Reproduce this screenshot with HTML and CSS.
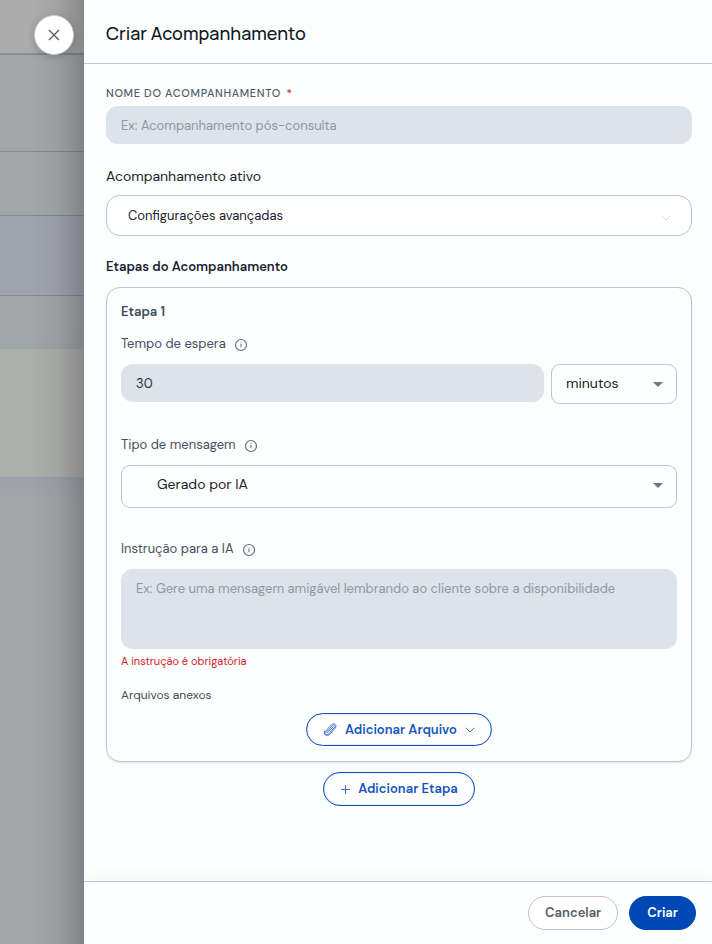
FILE: index.html
```html
<!DOCTYPE html>
<html lang="pt-BR">
<head>
    <meta charset="UTF-8">
    <meta name="viewport" content="width=device-width, initial-scale=1">
    <title>Criar Acompanhamento</title>
    <link rel="stylesheet" href="styles.css">
</head>
<body>
<svg width="0" height="0" class="sprite" aria-hidden="true">
    <symbol id="info" viewBox="0 0 14 14">
        <circle cx="7" cy="7" r="5.5" fill="none" stroke="currentColor" stroke-width="1.2"/>
        <path d="M6.4 6.2H7.2L6.8 9.3M7.1 4.4V5" fill="none" stroke="currentColor"/>
    </symbol>
    <symbol id="chevron" viewBox="0 0 10 6">
        <path d="M.8.8L5 5L9.2.8" fill="none" stroke="currentColor"/>
    </symbol>
    <symbol id="caret" viewBox="0 0 10 5">
        <path d="M0 0H10L5 5Z" fill="currentColor"/>
    </symbol>
</svg>
<div class="page">
    <div class="backdrop">
        <div class="strip strip-top"></div>
        <div class="strip strip-tabs"></div>
        <div class="strip strip-filter"></div>
        <div class="strip strip-head"></div>
        <div class="strip strip-gap"></div>
        <div class="strip strip-row"></div>
        <div class="strip strip-rest"></div>
        <button type="button" class="close" aria-label="Fechar">
            <svg width="12" height="12" viewBox="0 0 12 12"><path d="M1 1L11 11M11 1L1 11" fill="none" stroke="currentColor" stroke-width="1.2"/></svg>
        </button>
    </div>
    <form class="drawer">
        <header class="drawer-header">
            <h1>Criar Acompanhamento</h1>
        </header>
        <main class="drawer-body">
            <label class="label-caps" for="nome">Nome do acompanhamento <span class="required">*</span></label>
            <input class="field" id="nome" type="text" placeholder="Ex: Acompanhamento pós-consulta">

            <p class="active-label">Acompanhamento ativo</p>
            <button type="button" class="accordion">
                <span>Configurações avançadas</span>
                <svg width="10" height="6"><use href="#chevron"/></svg>
            </button>

            <h2>Etapas do Acompanhamento</h2>
            <section class="card">
                <h3>Etapa 1</h3>
                <div class="group">
                    <div class="label-row">
                        <label for="tempo">Tempo de espera</label>
                        <svg width="14" height="14"><use href="#info"/></svg>
                    </div>
                    <div class="time-row">
                        <input class="field" id="tempo" type="text" inputmode="numeric" value="30">
                        <div class="select">
                            <select aria-label="Unidade de tempo">
                                <option>minutos</option>
                            </select>
                            <svg width="10" height="5"><use href="#caret"/></svg>
                        </div>
                    </div>
                </div>
                <div class="group">
                    <div class="label-row">
                        <label for="tipo">Tipo de mensagem</label>
                        <svg width="14" height="14"><use href="#info"/></svg>
                    </div>
                    <div class="select select-type">
                        <select id="tipo">
                            <option>Gerado por IA</option>
                        </select>
                        <svg width="10" height="5"><use href="#caret"/></svg>
                    </div>
                </div>
                <div class="group">
                    <div class="label-row">
                        <label for="instrucao">Instrução para a IA</label>
                        <svg width="14" height="14"><use href="#info"/></svg>
                    </div>
                    <textarea class="field" id="instrucao" placeholder="Ex: Gere uma mensagem amigável lembrando ao cliente sobre a disponibilidade"></textarea>
                    <p class="error">A instrução é obrigatória</p>
                </div>
                <p class="files-label">Arquivos anexos</p>
                <button type="button" class="btn btn-outline">
                    <svg width="14" height="14" viewBox="0 0 14 14"><path d="M9.8 4.1L5 9.3C4.2 10.1 3.3 9.3 4 8.5L9.3 2.7C10.7 1.2 12.8 3 11.4 4.6L5.9 10.8C3.7 13.2.5 10.5 2.7 8L8.4 1.8C10.9-.8 14.6 2.4 12.2 5.2L6.7 11.5C3.9 14.5-.3 11.1 1.8 8" fill="none" stroke="currentColor" stroke-width=".9" stroke-linecap="round"/></svg>
                    <span>Adicionar Arquivo</span>
                    <svg width="10" height="6"><use href="#chevron"/></svg>
                </button>
            </section>
            <button type="button" class="btn btn-outline btn-step">
                <svg width="10" height="10" viewBox="0 0 10 10"><path d="M5.5 1V10M1 5.5H10" fill="none" stroke="currentColor"/></svg>
                <span>Adicionar Etapa</span>
            </button>
        </main>
        <footer class="drawer-footer">
            <button type="button" class="btn btn-cancel">Cancelar</button>
            <button type="submit" class="btn btn-primary">Criar</button>
        </footer>
    </form>
</div>
</body>
</html>
```
FILE: styles.css
```css
* {
    box-sizing: border-box;
    margin: 0;
    padding: 0;
}

body {
    font-family: "DM Sans", Inter, sans-serif;
    font-size: 13px;
    line-height: 20px;
    color: #1b222b;
    background: #fdfefe;
}

button, input, select, textarea {
    font: inherit;
    color: inherit;
}

button {
    cursor: pointer;
}

svg {
    flex: none;
    display: block;
}

.sprite {
    position: absolute;
}

.page {
    display: grid;
    grid-template-columns: 84px minmax(0, 1fr);
    min-height: 100vh;
}

/* dimmed page behind the drawer */
.backdrop {
    position: relative;
    display: flex;
    flex-direction: column;
    background: #a3a7aa;
}

.backdrop::after {
    content: "";
    position: absolute;
    top: 0;
    right: 0;
    bottom: 0;
    width: 54px;
    background: linear-gradient(to right, rgba(0, 0, 0, 0), rgba(0, 0, 0, .05) 50%, rgba(0, 0, 0, .21));
}

.strip-top {
    height: 55px;
    background: #acacad;
    border-bottom: 2px solid #868c90;
}

.strip-tabs {
    height: 97px;
    border-bottom: 1px solid #868c8f;
}

.strip-filter {
    height: 64px;
    border-bottom: 1px solid #7f8d9c;
}

.strip-head {
    height: 80px;
    background: #a0a4ae;
    border-bottom: 1px solid #7f8d9c;
}

.strip-gap {
    height: 53px;
    background: linear-gradient(#a3a7aa 60%, #9ea5a9);
}

.strip-row {
    height: 128px;
    background: #acaeac;
}

.strip-rest {
    flex: 1;
    background: linear-gradient(#9ca1ab, #a3a7aa 24px);
}

.close {
    position: absolute;
    top: 15px;
    right: 10px;
    z-index: 1;
    display: flex;
    align-items: center;
    justify-content: center;
    width: 40px;
    height: 40px;
    color: #4c555e;
    background: #fff;
    border: 1px solid #c3ccd6;
    border-radius: 50%;
    box-shadow: 0 2px 8px rgba(0, 0, 0, .2);
}

.drawer {
    display: flex;
    flex-direction: column;
}

.drawer-header {
    padding: 21px 22px 18px;
    border-bottom: 1px solid #bcc4d0;
}

h1 {
    font-family: Manrope, "DM Sans", Inter, sans-serif;
    font-size: 18px;
    font-weight: 500;
    line-height: 24px;
    color: #101820;
}

.drawer-body {
    flex: 1;
    display: flex;
    flex-direction: column;
    padding: 19px 20px 20px 22px;
}

.label-caps {
    margin-bottom: 3px;
    font-size: 11px;
    font-weight: 500;
    letter-spacing: .06em;
    text-transform: uppercase;
    color: #525c66;
}

.required {
    margin-left: 2px;
    color: #dc2626;
}

.field {
    display: block;
    width: 100%;
    height: 38px;
    padding: 0 15px;
    color: #2b323b;
    background: #dce3eb;
    border: 0;
    border-radius: 12px;
}

.field::placeholder {
    color: #8f979f;
    opacity: 1;
}

textarea.field {
    height: 80px;
    padding: 10px 15px;
    resize: none;
}

.active-label {
    margin: 22px 0 9px;
    font-size: 14px;
}

.accordion {
    display: flex;
    align-items: center;
    justify-content: space-between;
    height: 41px;
    padding: 0 20px 0 21px;
    background: #fff;
    border: 1px solid #bcc4d0;
    border-radius: 14px;
}

.accordion svg {
    margin-top: 4px;
    color: #d9dcdf;
}

h2 {
    margin: 21px 0 10px;
    font-size: 13px;
    font-weight: 600;
    line-height: 20px;
    color: #1a2233;
}

.card {
    display: flex;
    flex-direction: column;
    padding: 14px 14px 15px;
    border: 1px solid #bcc4d0;
    border-radius: 14px;
    box-shadow: 0 1px 2px rgba(0, 0, 0, .12);
}

h3 {
    margin-bottom: 12px;
    font-size: 13px;
    font-weight: 600;
    line-height: 20px;
    color: #3f4a5c;
}

.group {
    margin-bottom: 31px;
}

.label-row {
    display: flex;
    align-items: center;
    gap: 8px;
    margin-bottom: 10px;
    color: #465060;
}

.label-row svg {
    margin-top: 2px;
    color: #666e77;
}

.time-row {
    display: grid;
    grid-template-columns: minmax(0, 1fr) 126px;
    gap: 7px;
}

/* the caret shares the select's grid cell */
.select {
    display: grid;
    align-items: center;
    height: 40px;
}

.select select,
.select svg {
    grid-area: 1 / 1;
}

.select select {
    appearance: none;
    width: 100%;
    height: 100%;
    padding: 0 36px 2px 14px;
    font-size: 14px;
    background: none;
    border: 1px solid #bcc4d0;
    border-radius: 9px;
}

.select svg {
    justify-self: end;
    margin-right: 14px;
    color: #70757a;
    pointer-events: none;
}

.select-type {
    height: 43px;
}

.select-type select {
    padding-left: 35px;
    padding-bottom: 5px;
}

.select-type svg {
    margin-bottom: 3px;
}

.group .error {
    margin-top: 4px;
    font-size: 11px;
    line-height: 16px;
    color: #d0202a;
}

.files-label {
    margin: -15px 0 8px;
    font-size: 12px;
    color: #454b52;
}

.btn {
    display: flex;
    align-items: center;
    justify-content: center;
    gap: 8px;
    height: 34px;
    padding: 0 16px;
    font-weight: 600;
    border: 1px solid #bcc4d0;
    border-radius: 17px;
    background: #fff;
}

.btn-outline {
    align-self: center;
    height: 33px;
    color: #1556bd;
    border-color: #0f52ba;
    box-shadow: inset 0 0 1px #0f52ba;
}

.btn-outline svg {
    opacity: .85;
}

.btn-step {
    height: 34px;
    margin-top: 10px;
}

.drawer-footer {
    display: flex;
    justify-content: flex-end;
    gap: 11px;
    padding: 14px 16px;
    border-top: 1px solid #bcc4d0;
    box-shadow: 0 -4px 16px rgba(0, 0, 0, .04);
}

.btn-cancel {
    color: #545e68;
}

.btn-primary {
    padding: 0 17px;
    color: #fff;
    background: #0049b5;
    border-color: #0049b5;
}
```
